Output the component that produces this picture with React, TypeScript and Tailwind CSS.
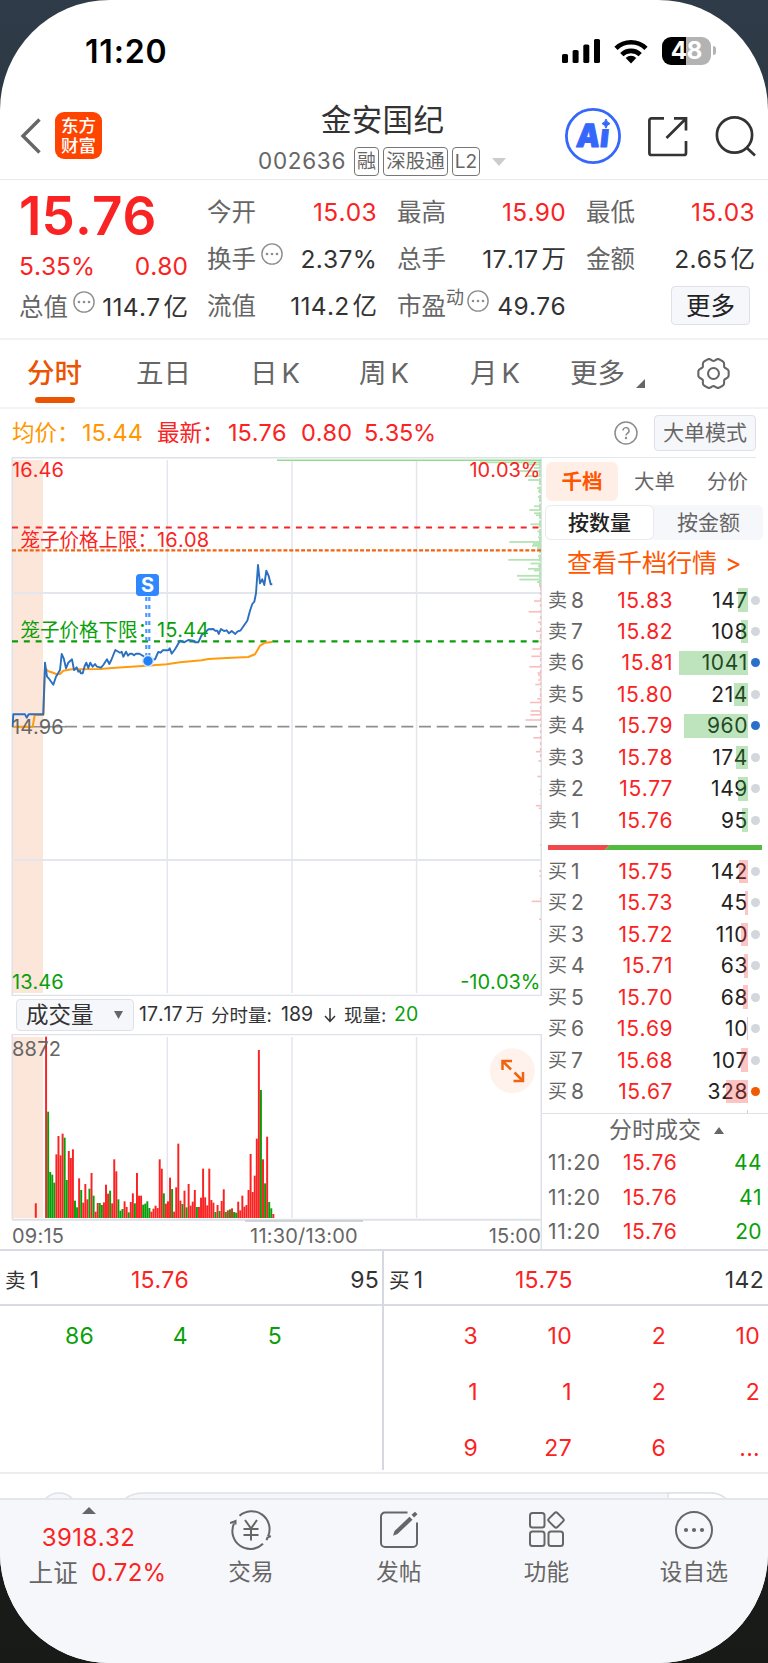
import type { ReactNode } from "react";

const RED = "#fa2323";
const GREEN = "#0a9f0a";

/* ---------- data ---------- */

const sells = [
  ["8", "15.83", 147], ["7", "15.82", 108], ["6", "15.81", 1041], ["5", "15.80", 214],
  ["4", "15.79", 960], ["3", "15.78", 174], ["2", "15.77", 149], ["1", "15.76", 95],
] as const;

const buys = [
  ["1", "15.75", 142], ["2", "15.73", 45], ["3", "15.72", 110], ["4", "15.71", 63],
  ["5", "15.70", 68], ["6", "15.69", 10], ["7", "15.68", 107], ["8", "15.67", 328],
] as const;

const priceLine =
  "38,830 40,793 75,793 80,803 86,793 130,793 135,638 141,680 147,686 160,704 168,680 180,660 185,612 191,625 198,655 205,638 216,628 222,660 230,652 235,665 240,662 242,670 248,670 254,648 259,638 265,654 271,638 278,650 285,642 291,650 303,653 310,645 321,628 328,642 334,630 346,600 360,608 365,605 370,620 378,605 384,617 390,611 396,611 402,616 408,611 418,611 430,618 443,633 465,628 475,606 482,608 488,601 505,601 509,595 515,611 525,598 540,572 552,577 565,570 580,572 585,577 595,577 605,555 615,548 625,538 640,537 645,542 652,542 656,552 663,537 672,543 680,541 687,550 695,543 706,552 712,545 722,541 733,525 742,512 750,482 757,462 763,455 768,430 774,345 780,400 787,388 793,405 799,362 806,378 812,403 817,403";
const avgLine =
  "40,830 98,830 104,795 130,795 135,655 145,664 155,667 170,673 180,672 190,662 215,658 300,657 346,653 440,647 500,643 540,637 605,631 625,627 680,624 745,621 765,613 780,587 795,578 817,576";

/* depth profile along the right edge: y, left x */
const askDepth: [number, number][] = [
  [462.3, 480], [464.5, 528], [468, 534], [471, 517], [476, 527], [480, 528], [483, 539], [488, 537], [491, 538],
  [497, 538], [500, 540], [506.3, 534], [510, 529.3], [513.3, 534], [515.3, 536], [524.3, 530.5], [531.5, 537.3],
  [535, 540], [537.3, 538], [542, 509.3], [544, 533], [545.8, 532], [548, 537], [552, 539], [556, 538],
  [559.8, 508.3], [563.5, 530.5], [566, 538], [568.8, 528], [570.5, 534], [575.8, 517], [579.5, 519.3], [582, 537], [584, 539],
];
const bidDepth: [number, number][] = [
  [586, 539], [590, 540], [601, 534], [611.8, 528.7], [622.3, 538], [631.3, 536], [638, 539.5], [649, 532.3], [656.3, 531.3],
  [666.8, 529.3], [673, 537.5], [675, 538], [680, 538.3], [684.5, 535.3], [693, 540], [698.8, 537.3], [702.5, 530],
  [711, 530.6], [714.8, 530.3], [720, 525.6], [726, 540], [737.8, 533.3], [743, 540.6], [751.7, 536], [761, 538.4],
  [776.5, 537.3], [790, 540], [794, 540], [805.7, 535.8], [808.3, 538.7], [823, 540.4], [845, 540], [871, 539],
  [876, 539.4], [898.5, 540], [901.4, 531.7], [919.3, 539],
];

/* one entry per minute: colour and top edge */
const volume =
  "R20 G245 G426 G434 G458 R373 R318 R376 R311 G323 G450 R363 R384 R358 G512 G532 R445 G480 R518 R462 R508 G476 R429 G497 R545 R519 G519 G525 R517 R464 R491 G482 R520 R388 R424 G508 G542 G537 R514 R531 G547 R516 R490 G520 R429 R497 R497 G524 G521 G514 G534 R545 R536 R527 R534 R388 R416 G490 R521 R514 R443 G477 R545 R472 R341 R512 G522 R482 G532 R462 R527 R515 R480 G531 R531 R503 R416 R502 R526 R416 R510 R518 G546 R525 G543 R513 R478 G546 R541 G538 R535 G546 G548 R515 R541 R497 R530 R525 R480 R372 R486 R437 R326 R60 G180 R388 G460 R320 G516 G535 R552".split(" ");

const toXY = (pts: string) =>
  pts
    .split(" ")
    .map((p) => {
      const [x, y] = p.split(",").map(Number);
      return `${(x / 3).toFixed(1)},${(450 + y / 3).toFixed(1)}`;
    })
    .join(" ");

/* ---------- small pieces ---------- */

function Dots({ className = "" }: { className?: string }) {
  return (
    <svg viewBox="0 0 22 22" className={`h-[22px] w-[22px] shrink-0 ${className}`}>
      <circle cx="11" cy="11" r="10.1" fill="none" stroke="#8c8c8c" strokeWidth="1.4" />
      <g fill="#8c8c8c">
        <circle cx="6" cy="11" r="1.3" />
        <circle cx="11" cy="11" r="1.3" />
        <circle cx="16" cy="11" r="1.3" />
      </g>
    </svg>
  );
}

function Stat({ label, value, unit, red, icon }: { label: string; value: string; unit?: string; red?: boolean; icon?: ReactNode }) {
  return (
    <div className="flex items-center justify-between">
      <div className="flex items-center text-[24.5px] tracking-normal text-[#666]">
        {label}
        {icon}
      </div>
      <div className={red ? "text-[#fa2323]" : "text-[#333]"}>
        {value}
        {unit && <span className="ml-[3px] tracking-normal">{unit}</span>}
      </div>
    </div>
  );
}

function StatusBar() {
  return (
    <div className="flex h-[102px] shrink-0 items-start pl-[85px]">
      <div className="mt-[36px] w-[477px] text-[32px] leading-8 font-semibold tracking-[0.8px] text-black">11:20</div>
      <svg viewBox="0 0 39 24" className="mt-[39px] h-6 w-[39px]">
        <rect x="0" y="15" width="6" height="9" rx="1.6" />
        <rect x="10.6" y="11" width="6" height="13" rx="1.6" />
        <rect x="21.3" y="5.5" width="6" height="18.5" rx="1.6" />
        <rect x="32" y="0" width="6" height="24" rx="1.6" />
      </svg>
      <svg viewBox="0 0 34 25" className="mt-[39px] ml-[12.5px] h-[25px] w-[34px]" fill="none" stroke="#000" strokeWidth="4.6">
        <path d="M2 9.3a21.5 21.5 0 0 1 30 0" />
        <path d="M7.8 15.6a13.2 13.2 0 0 1 18.4 0" />
        <path d="M17 24.5 11.7 19a7.6 7.6 0 0 1 10.6 0z" fill="#000" stroke="none" />
      </svg>
      <div className="mt-[37px] ml-[14.5px] flex h-[27.5px] w-[49px] items-center justify-center rounded-[9px] bg-[linear-gradient(90deg,#000_49%,#b3b3b3_49%)] text-[24px] leading-none font-bold tracking-[-0.2px] text-white">
        48
      </div>
      <div className="mt-[46px] ml-[2px] h-[9px] w-[3px] rounded-r-full bg-[#b3b3b3]" />
    </div>
  );
}

function Header() {
  return (
    <div className="flex h-[78px] shrink-0 border-b border-[#e9e9eb]">
      <svg viewBox="0 0 22 38" className="mt-[15px] ml-[20px] h-[38px] w-[22px]" fill="none" stroke="#666" strokeWidth="3.4">
        <path d="M19.5 2.5 3 19l16.5 16.5" />
      </svg>
      <div className="mt-[10px] ml-[13px] flex h-[47px] w-[47px] flex-col items-center justify-center rounded-[9px] bg-[#ff4400] text-[17.5px] leading-[20px] font-medium tracking-normal text-white">
        <span>东方</span>
        <span>财富</span>
      </div>
      <div className="flex w-[463px] flex-col pl-[156px]">
        <div className="mt-[1px] pl-[63px] text-[30.5px] leading-[34px] text-[#333]">金安国纪</div>
        <div className="mt-[10px] flex h-[29px] items-center text-[19px] leading-none tracking-normal text-[#666]">
          <span className="w-[96px] text-[22.5px] tracking-[0.7px]">002636</span>
          <span className="flex h-[29px] w-[25px] items-center justify-center rounded-[4px] border-[1.5px] border-[#777]">融</span>
          <span className="ml-[4px] flex h-[29px] w-[65px] items-center justify-center rounded-[4px] border-[1.5px] border-[#777] text-[19.5px]">深股通</span>
          <span className="ml-[4px] flex h-[29px] w-[28px] items-center justify-center rounded-[4px] border-[1.5px] border-[#777]">L2</span>
          <svg viewBox="0 0 14 8" className="ml-[12px] h-2 w-[14px]" fill="#ccc">
            <path d="M0 0h14L7 8z" />
          </svg>
        </div>
      </div>
      <svg viewBox="0 0 56 56" className="mt-[6px] h-14 w-14">
        <circle cx="28" cy="28" r="26.6" fill="#fff" stroke="#3667fb" strokeWidth="2.8" />
        <text
          x="10.5"
          y="39"
          fontSize="32"
          fontWeight="900"
          fill="#3667fb"
          stroke="#3667fb"
          strokeWidth="1"
          strokeLinejoin="round"
          textLength="33"
          lengthAdjust="spacingAndGlyphs"
          transform="translate(4 0) skewX(-6)"
        >
          Aı
        </text>
        <path d="M41 11q.8 3.6 4 4.600-3.200 1-4 4.600-.8-3.600-4-4.600 3.200-1 4-4.600z" fill="#3667fb" stroke="#3667fb" />
      </svg>
      <svg viewBox="0 0 42 42" className="mt-[14px] ml-[26px] h-[42px] w-[42px]" fill="none" stroke="#333" strokeWidth="2.7">
        <path d="M17 2.4H4.400a2 2 0 0 0-2 2V37a2 2 0 0 0 2 2H37a2 2 0 0 0 2-2V25" />
        <path d="M27 2.4h12v12M38.500 3 19.500 22" />
      </svg>
      <svg viewBox="0 0 42 42" className="mt-[13px] ml-[26px] h-[42px] w-[42px]" fill="none" stroke="#333" strokeWidth="2.7">
        <circle cx="19.5" cy="20" r="17.6" />
        <path d="m32 33 8 7.5" />
      </svg>
    </div>
  );
}

function Quote() {
  return (
    <div className="flex h-[160px] shrink-0 border-b-2 border-[#f3f3f5] pl-[19px] text-[24.5px] leading-[30px]">
      <div className="w-[169px]">
        <div className="mt-[11px] text-[53px] leading-[50px] font-semibold tracking-[0.1px] text-[#fa2323]">15.76</div>
        <div className="mt-[10px] flex justify-between tracking-normal text-[#fa2323]">
          <span>5.35%</span>
          <span>0.80</span>
        </div>
        <div className="mt-[10px] flex items-center">
          <span className="tracking-normal text-[#666]">总值</span>
          <Dots className="mb-[9px] ml-[5px]" />
          <span className="ml-auto text-[#333]">
            114.7<span className="ml-[3px] tracking-normal">亿</span>
          </span>
        </div>
      </div>
      <div className="ml-[19px] grid h-[142px] w-[548px] grid-cols-[170px_169px_169px] grid-rows-[47px_47px_47px] items-center gap-x-[20px] pt-[8px]">
        <Stat label="今开" value="15.03" red />
        <Stat label="最高" value="15.90" red />
        <Stat label="最低" value="15.03" red />
        <Stat label="换手" value="2.37%" icon={<Dots className="mb-[9px] ml-[5px]" />} />
        <Stat label="总手" value="17.17" unit="万" />
        <Stat label="金额" value="2.65" unit="亿" />
        <Stat label="流值" value="114.2" unit="亿" />
        <Stat
          label="市盈"
          value="49.76"
          icon={
            <>
              <span className="mb-[15px] text-[18px] leading-none">动</span>
              <Dots className="mb-[9px] ml-[3px]" />
            </>
          }
        />
        <div className="mr-[5px] flex h-[39px] w-[79px] items-center justify-center justify-self-end rounded-[4px] border-[1.5px] border-[#dfe1e8] bg-[#f6f7fa] tracking-normal text-[#222]">
          更多
        </div>
      </div>
    </div>
  );
}

const gear = Array.from({ length: 72 }, (_, i) => {
  const a = (i * Math.PI) / 36;
  const r = 13.9 + 1.3 * Math.cos(6 * a) - 0.5 * Math.cos(12 * a);
  return `${(16 + r * Math.cos(a)).toFixed(2)},${(16 + r * Math.sin(a)).toFixed(2)}`;
}).join(" ");

function Tabs() {
  return (
    <div className="flex h-[69px] shrink-0 border-b-2 border-[#f3f3f5] pt-[16px] text-[27.5px] leading-[34px] tracking-normal text-[#666]">
      <div className="ml-[27px] flex w-[109px] flex-col font-medium text-[#ea5504]">
        分时
        <div className="mt-[7px] ml-[8px] h-[6px] w-[40px] rounded-[3px] bg-[#ea5504]" />
      </div>
      <div className="w-[114px]">五日</div>
      <div className="w-[109px]">日<span className="ml-[4px]">K</span></div>
      <div className="w-[111px]">周<span className="ml-[4px]">K</span></div>
      <div className="w-[100px]">月<span className="ml-[4px]">K</span></div>
      <div className="flex w-[127px]">
        更多
        <svg viewBox="0 0 9 9" className="mt-[23px] ml-[11px] h-[9px] w-[9px]" fill="#666">
          <path d="M9 0v9H0z" />
        </svg>
      </div>
      <svg viewBox="0 0 32 32" className="mt-[0.5px] h-[33px] w-[33px]" fill="none" stroke="#666" strokeWidth="2">
        <polygon points={gear} strokeLinejoin="round" />
        <circle cx="16" cy="16" r="5.3" />
      </svg>
    </div>
  );
}

function AvgRow() {
  return (
    <div className="flex h-[48px] shrink-0 items-center pr-[12px] pl-[12px] text-[23.5px] leading-[30px] text-[#fa2323]">
      <div className="w-[70px] text-[22.5px] tracking-normal text-[#ff9800]">均价：</div>
      <div className="w-[75px] tracking-normal text-[#ff9800]">15.44</div>
      <div className="w-[71px] text-[22.5px] tracking-normal">最新：</div>
      <div className="w-[73px] tracking-normal">15.76</div>
      <div className="w-[63px] tracking-normal">0.80</div>
      <div className="w-[250px] tracking-[-0.2px]">5.35%</div>
      <svg viewBox="0 0 24 24" className="h-6 w-6" fill="none" stroke="#8c8c8c" strokeWidth="1.5">
        <circle cx="12" cy="12" r="11" />
        <path d="M9 9.6a3 3 0 1 1 4.300 2.700c-.9.500-1.300 1-1.300 2.200" />
        <circle cx="12" cy="17" r=".5" />
      </svg>
      <div className="ml-[16px] flex h-[36px] w-[102px] items-center justify-center rounded-[4px] border-[1.5px] border-[#dfe1e8] bg-[#f6f7fa] text-[21px] tracking-normal text-[#666]">
        大单模式
      </div>
    </div>
  );
}

function PriceChart() {
  return (
    <svg viewBox="0 457 542 539" className="block h-[539px] w-[542px] shrink-0 tracking-normal" fontSize="20">
      <rect x="12" y="460" width="31" height="533" fill="#fce6da" />
      <g stroke="#e4e6ee" strokeWidth="1.5">
        <path d="M12 457.700H542M12.300 457V996M12 995.600H542M541.300 457V996" stroke="#dfe1e8" />
        <path d="M167.300 460V993M292 460V993M416.600 460V993" />
        <path d="M12 593H541M12 860H541" strokeWidth="2" />
      </g>
      <path d="M277 460.300H541" stroke="#93db93" strokeWidth="1.6" />
      {askDepth.map(([y, x]) => (
        <path key={y} d={`M${x} ${y}H541`} stroke="#b4e3b4" strokeWidth="1.8" />
      ))}
      <path d="M540 461V586" stroke="#b4e3b4" strokeWidth="2" strokeDasharray="7 1.5" />
      {bidDepth.map(([y, x]) => (
        <path key={y} d={`M${x} ${y}H541`} stroke="#fcbcbc" strokeWidth="1.6" />
      ))}
      <path d="M540.500 586V760" stroke="#fcbcbc" strokeWidth="1.3" strokeDasharray="3 3" />
      <path d="M12 527.500H540" stroke={RED} strokeWidth="2.2" strokeDasharray="6 5.830" />
      <path d="M12 550.300H541" stroke="#f0640f" strokeWidth="2.2" strokeDasharray="4 1.9" />
      <path d="M12 641.300H540" stroke={GREEN} strokeWidth="2.2" strokeDasharray="6 5.830" />
      <path d="M65 726.700H538" stroke="#8f8f8f" strokeWidth="1.8" strokeDasharray="12 5.700" />
      <path d="M12 726.700H66" stroke="#8f8f8f" strokeWidth="1.6" />
      <polyline points={toXY(avgLine)} fill="none" stroke="#ff9b0e" strokeWidth="2" strokeLinejoin="round" />
      <polyline points={toXY(priceLine)} fill="none" stroke="#2a6fc0" strokeWidth="1.9" strokeLinejoin="round" />
      <g fill={RED}>
        <text x="12" y="477" className="tracking-[0.1px]">16.46</text>
        <text x="540.5" y="477" textAnchor="end">10.03%</text>
        <text x="20.5" y="546.5" fontSize="19.5">笼子价格上限：</text>
        <text x="157" y="546.5" className="tracking-[0.2px]">16.08</text>
      </g>
      <g fill={GREEN}>
        <text x="20.5" y="637" fontSize="19.5">笼子价格下限：</text>
        <text x="157" y="637">15.44</text>
        <text x="12" y="988.5">13.46</text>
        <text x="540.5" y="988.5" textAnchor="end">-10.03%</text>
      </g>
      <text x="12" y="733.5" fill="#666">14.96</text>
      <path d="M146.300 597V656M149.300 597V656" stroke="#4a98ff" strokeWidth="2.2" strokeDasharray="4 4" />
      <rect x="136" y="574" width="23" height="22" rx="3.5" fill="#2f88ff" />
      <text x="147.5" y="592" fontSize="20" fontWeight="700" fill="#fff" textAnchor="middle">S</text>
      <circle cx="148" cy="661" r="5.4" fill="#1f80f5" stroke="#d5e7fd" strokeWidth="1.5" />
    </svg>
  );
}

function VolumeHeader() {
  return (
    <div className="flex h-[38px] shrink-0 items-center pl-[16px] text-[19.5px] leading-none tracking-normal text-[#333]">
      <div className="flex h-[32px] w-[118px] items-center rounded-[4px] border-[1.5px] border-[#dfe1e8] bg-[#f6f7fa] pl-[9px] text-[22.5px]">
        成交量
        <svg viewBox="0 0 9 8" className="ml-[20px] h-2 w-[9px]" fill="#666">
          <path d="M0 0h9L4.500 8z" />
        </svg>
      </div>
      <span className="ml-[5px] w-[72px]">
        17.17<span className="ml-[3px] text-[18.5px]">万</span>
      </span>
      <span className="w-[70px] text-[18.5px]">分时量:</span>
      <span className="w-[42px]">189</span>
      <svg viewBox="0 0 14 16" className="mr-[7px] h-4 w-[14px]" fill="none" stroke="#333" strokeWidth="1.5">
        <path d="M7 1v13M2 9l5 5.500L12 9" />
      </svg>
      <span className="w-[50px] text-[18.5px]">现量:</span>
      <span className="text-[#0a9f0a]">20</span>
    </div>
  );
}

function VolumeChart() {
  return (
    <svg viewBox="0 1034 542 215" className="block h-[215px] w-[542px] shrink-0 tracking-[0.2px]" fontSize="20">
      <rect x="12" y="1037" width="31" height="181" fill="#fce6da" />
      <g stroke="#e4e6ee" strokeWidth="1.5">
        <path d="M12 1034.500H542M12.300 1034V1219M541.300 1034V1249" stroke="#dfe1e8" />
        <path d="M12 1219.800H542" stroke="#dfe1e8" strokeWidth="2" />
        <path d="M167.300 1037V1218M292 1037V1218M416.600 1037V1218" />
      </g>
      <path d="M245 1221H363" stroke="#c6c7cb" strokeWidth="1.5" />
      <rect x="34.8" y="1203.300" width="2" height="14.500" fill={RED} />
      {volume.map((v, i) => {
        const top = 1030 + Number(v.slice(1)) / 3;
        return <rect key={i} x={45.1 + i * 2.066} y={top} width="1.950" height={1218 - top} fill={v[0] === "R" ? RED : GREEN} />;
      })}
      <g fill="#666">
        <text x="12" y="1056">8872</text>
        <text x="12" y="1243">09:15</text>
        <text x="304" y="1243" textAnchor="middle">11:30/13:00</text>
        <text x="541" y="1243" textAnchor="end">15:00</text>
      </g>
      <circle cx="512.300" cy="1070.700" r="22.500" fill="#fff1eb" />
      <path d="M502.500 1070V1061H512M502.500 1061 511 1069.500M513.500 1081H523V1072M523 1081 514.500 1072.500" fill="none" stroke="#f0640f" strokeWidth="2.500" />
    </svg>
  );
}

function LevelRow({ side, row }: { side: "卖" | "买"; row: readonly [string, string, number] }) {
  const [n, price, qty] = row;
  const sell = side === "卖";
  const dot = qty > 300 ? (sell ? "bg-[#2a6fc8]" : "bg-[#f05a00]") : "bg-[#d3d6dd]";
  return (
    <div className="flex h-[31.46px] items-center text-[21px] leading-none text-[#666]">
      <span className="w-[23px] text-[19px] tracking-normal">{side}</span>
      <span>{n}</span>
      <span className="ml-auto tracking-[0.5px] text-[#fa2323]">{price}</span>
      <span className="relative ml-[3px] flex h-[24px] w-[72px] items-center justify-end tracking-[0.6px] text-[#222]">
        {qty}
        <span
          className={`absolute right-0 h-[23.5px] ${sell ? "bg-[#28a428]/30" : "bg-[#fa3c3c]/30"}`}
          style={{ width: Math.max(1, qty / 15) }}
        />
      </span>
      <span className={`ml-[3px] h-[9px] w-[9px] rounded-full ${dot}`} />
    </div>
  );
}

function OrderBook() {
  return (
    <div className="flex flex-1 flex-col text-[20.5px] leading-none tracking-normal text-[#666]">
      <div className="mr-[12px] h-[1.5px] bg-[#e4e6ee]" />
      <div className="mt-[3.5px] ml-[4px] flex h-[40px] items-center">
        <div className="flex h-[39px] w-[72px] items-center justify-center rounded-[6px] bg-[#ffeee5] font-bold text-[#ff5500]">千档</div>
        <div className="ml-[16px] w-[73px]">大单</div>
        <div>分价</div>
      </div>
      <div className="mt-[3px] ml-[3px] flex h-[35px] w-[218px] items-center rounded-[6px] bg-[#f6f7fa] text-[21px]">
        <div className="flex h-[35px] w-[109px] items-center justify-center rounded-[6px] border-[1.5px] border-[#eaebee] bg-white font-medium text-[#222]">按数量</div>
        <div className="ml-[23px]">按金额</div>
      </div>
      <div className="mt-[9px] ml-[25px] flex h-[30px] items-center text-[25px] text-[#ff5500]">
        查看千档行情<span className="ml-[8px]">&gt;</span>
      </div>
      <div className="mt-[6px] ml-[6px] w-[212px]">
        {sells.map((r) => (
          <LevelRow key={r[0]} side="卖" row={r} />
        ))}
      </div>
      <svg viewBox="0 0 216 5.3" className="mt-[9px] ml-[5px] h-[5.3px] w-[216px]">
        <path d="M0 0H62L57 5.300H0z" fill="#f0484b" />
        <path d="M62 0H216V5.300H57z" fill="#54b93f" />
      </svg>
      <div className="mt-[5.5px] ml-[6px] w-[212px]">
        {buys.map((r) => (
          <LevelRow key={r[0]} side="买" row={r} />
        ))}
      </div>
      <div className="mt-[2.5px] ml-[205px] h-[3px] w-px bg-[#fcbcbc]" />
      <div className="h-[1.5px] bg-[#dfe1e8]" />
      <div className="mt-[2px] ml-[67px] flex h-[28px] items-center text-[23px]">
        分时成交
        <svg viewBox="0 0 10 7" className="ml-[13px] h-[7px] w-[10px]" fill="#666">
          <path d="M5 0l5 7H0z" />
        </svg>
      </div>
      <div className="mt-[1.5px] ml-[6px] text-[21px] tracking-[0.4px]">
        {[44, 41, 20].map((q) => (
          <div key={q} className="flex h-[34.5px] w-[214px] items-center">
            <span className="w-[75px] tracking-[0.7px]">11:20</span>
            <span className="text-[#fa2323]">15.76</span>
            <span className="ml-auto text-[#0a9f0a]">{q}</span>
          </div>
        ))}
      </div>
    </div>
  );
}

function QueueTable() {
  const queue = [
    ["3", "10", "2", "10"],
    ["1", "1", "2", "2"],
    ["9", "27", "6", "..."],
  ];
  return (
    <div className="flex h-[223px] shrink-0 border-t-[2.5px] border-[#d9dbe2] pb-[2px] text-[23px] leading-none text-[#333]">
      <div className="w-[384px] border-r-2 border-[#d6d8e0]">
        <div className="flex h-[55px] items-center border-b-2 border-[#d9dbe2] pt-[5px] pr-[3px] pl-[5px]">
          <span className="w-[126px]"><span className="text-[20.5px]">卖</span><span className="ml-[4px]">1</span></span>
          <span className="tracking-[0.1px] text-[#fa2323]">15.76</span>
          <span className="ml-auto">95</span>
        </div>
        <div className="grid h-[60px] grid-cols-[94px_94px_94px] items-center text-right text-[#0a9f0a]">
          <span>86</span>
          <span>4</span>
          <span>5</span>
        </div>
      </div>
      <div className="flex-1">
        <div className="flex h-[55px] items-center border-b-2 border-[#d9dbe2] pt-[5px] pr-[4px] pl-[5px]">
          <span className="w-[126px]"><span className="text-[20.5px]">买</span><span className="ml-[4px]">1</span></span>
          <span className="tracking-[0.1px] text-[#fa2323]">15.75</span>
          <span className="ml-auto">142</span>
        </div>
        <div className="grid grid-cols-[94px_94px_94px_94px] pt-[2px] text-right text-[#fa2323]">
          {queue.flat().map((q, i) => (
            <span key={i} className="flex h-[56px] items-center justify-end">
              {q}
            </span>
          ))}
        </div>
      </div>
    </div>
  );
}

function NavItem({ label, className, children }: { label: string; className: string; children: ReactNode }) {
  return (
    <div className={`flex flex-col items-center pt-[9px] text-[22.5px] leading-[28px] text-[#666] ${className}`}>
      <svg viewBox="0 0 42 42" className="h-[42px] w-[42px]" fill="none" stroke="#666" strokeWidth="2">
        {children}
      </svg>
      <div className="mt-[7px]">{label}</div>
    </div>
  );
}

function BottomNav() {
  return (
    <div className="flex h-[165px] shrink-0 border-t-2 border-[#e4e6ea] bg-[#f6f7fa]">
      <div className="flex w-[177px] flex-col items-center pt-[7px] text-[24px] leading-[30px] text-[#fa2323]">
        <svg viewBox="0 0 14 7" className="h-[7px] w-[14px]" fill="#666">
          <path d="M7 0l7 7H0z" />
        </svg>
        <div className="mt-[9px] text-[24px] tracking-[0.4px]">3918.32</div>
        <div className="mt-[5px] ml-[18px] flex">
          <span className="mr-[13px] text-[24.5px] text-[#666]">上证</span>0.72%
        </div>
      </div>
      <NavItem label="交易" className="w-[148px]">
        <path d="M9.500 6.800A18 18 0 0 1 38 27.500M33 34.800A18 18 0 0 1 4 14.500M40.800 27l-3.300 1.600-1 2.500M0 14l4.500-1.500 1-.5v3.500" />
        <path d="m15 11 6 8.500L27 11M13.500 20h15M13.500 26h15M21 19.500v12" />
      </NavItem>
      <NavItem label="发帖" className="w-[148px]">
        <path d="M29.500 3.500H7a4 4 0 0 0-4 4V34a4 4 0 0 0 4 4h28a4 4 0 0 0 4-4V13.500" />
        <path d="M15 26.800 16.500 22 31.500 7.800l3 3L19.500 25z M33.500 5.800 37 2.800l2.500 2.500-3.300 3.200z" fill="#666" stroke="none" />
      </NavItem>
      <NavItem label="功能" className="w-[147px]">
        <rect x="4" y="4" width="14.5" height="14.5" rx="2.5" />
        <rect x="4" y="22.5" width="14.5" height="14.5" rx="2.5" />
        <rect x="22.5" y="22.5" width="14.5" height="14.5" rx="2.5" />
        <rect x="24" y="5" width="12" height="12" rx="2" transform="rotate(45 30 11)" />
      </NavItem>
      <NavItem label="设自选" className="w-[148px]">
        <circle cx="21" cy="21" r="18" />
        <g fill="#666" stroke="none">
          <circle cx="13" cy="21" r="2.1" />
          <circle cx="21" cy="21" r="2.1" />
          <circle cx="29" cy="21" r="2.1" />
        </g>
      </NavItem>
    </div>
  );
}

export default function App() {
  return (
    <div className="h-[1663px] w-[768px] overflow-hidden bg-linear-to-b from-[#2f3b48] to-[#171a17] font-['Inter','Noto_Sans_CJK_SC',sans-serif] tracking-[0.3px] [font-kerning:none]">
      <div className="flex h-[1663px] w-[768px] flex-col overflow-hidden rounded-[110px] bg-white">
        <StatusBar />
        <Header />
        <Quote />
        <Tabs />
        <AvgRow />
        <div className="flex h-[792px] shrink-0">
          <div className="flex w-[542px] flex-col">
            <PriceChart />
            <VolumeHeader />
            <VolumeChart />
          </div>
          <OrderBook />
        </div>
        <QueueTable />
        <div className="h-[2px] shrink-0 bg-[#ededef]" />
        <svg viewBox="0 0 768 24" className="block h-6 w-[768px] shrink-0" fill="#f6f7fa" stroke="#dfe1e8" strokeWidth="1.5">
          <circle cx="59" cy="38" r="19" />
          <path d="M125 25q6-6 20-6H710q10 0 16 6z" />
          <path d="M668 25v-6h42q10 0 16 6z" fill="#fff" />
        </svg>
        <BottomNav />
      </div>
    </div>
  );
}
